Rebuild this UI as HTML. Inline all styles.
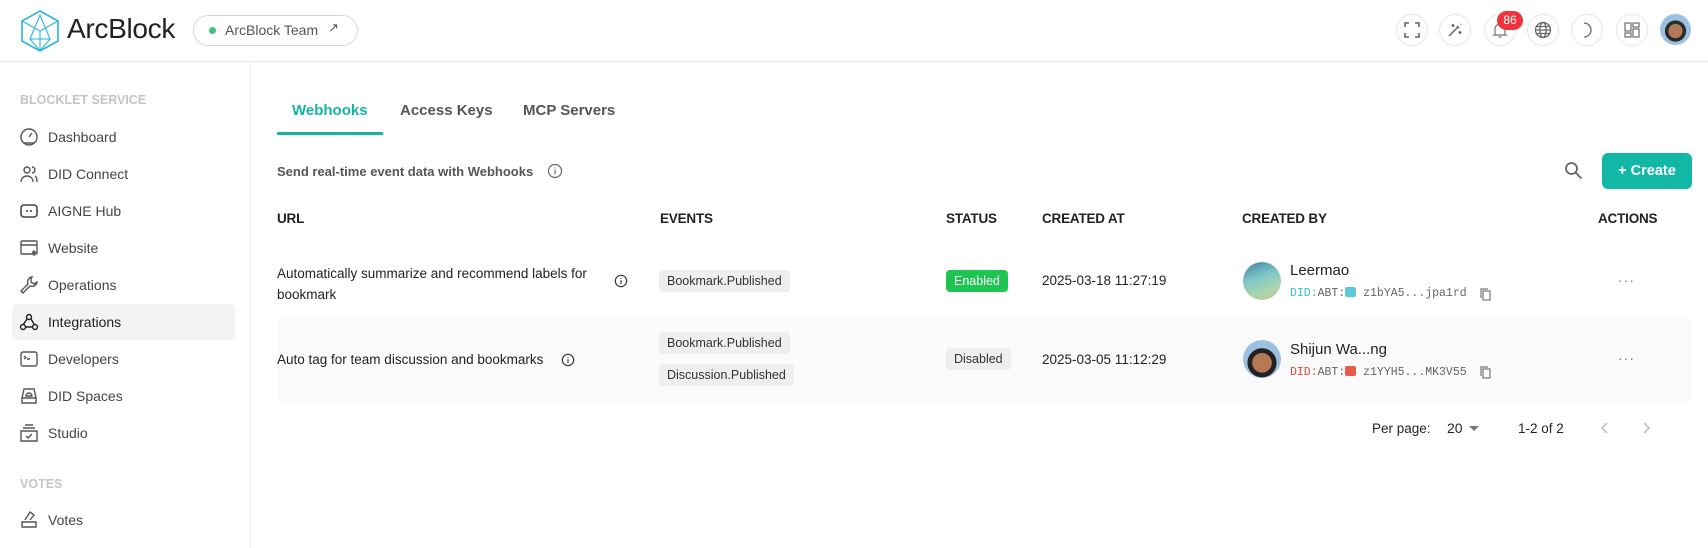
<!DOCTYPE html>
<html><head><meta charset="utf-8"><style>
*{box-sizing:border-box;margin:0;padding:0}
body{width:1708px;height:548px;overflow:hidden;background:#fff;font-family:"Liberation Sans",sans-serif;color:#222;position:relative}
.a{position:absolute;white-space:nowrap}
.hdr{position:absolute;left:0;top:0;width:1708px;height:62px;border-bottom:1px solid #e8e8e8}
.side{position:absolute;left:0;top:62px;width:251px;height:486px;border-right:1px solid #eee}
.ic{position:absolute;width:32px;height:32px;border:1px solid #e6e6e6;border-radius:50%;top:14px;display:flex;align-items:center;justify-content:center}
.nav{position:absolute;left:48px;font-size:14px;color:#444}
.ni{position:absolute;left:19px;width:20px;height:20px}
.th{position:absolute;top:211px;font-size:13.5px;color:#222;font-weight:bold;letter-spacing:-.2px}
.chip{position:absolute;height:22px;line-height:22px;padding:0 8px;background:#eee;border-radius:4px;font-size:12.5px;color:#333}
.td{position:absolute;font-size:13.5px;color:#222}
.mono{font-family:"Liberation Mono",monospace;font-size:11.5px;color:#666}
</style></head><body>
<div class="hdr"></div>
<svg class="a" style="left:19px;top:9px" width="42" height="44" viewBox="0 0 42 44" fill="none" stroke="#2bb5d8" stroke-width="1.6"><path d="M21 2 L39 12 L39 32 L21 42 L3 32 L3 12 Z"/><path d="M3 12 L21 22 L39 12 M21 22 L21 42 M21 6 L11 30 L31 30 Z M11 30 L21 42 L31 30" stroke-width="1.1"/></svg>
<div class="a" style="left:67px;top:13px;font-size:28px;color:#222;letter-spacing:-.3px">ArcBlock</div>
<div class="a" style="left:193px;top:15px;width:165px;height:31px;border:1px solid #d8d8d8;border-radius:16px"></div>
<div class="a" style="left:209px;top:27px;width:7px;height:7px;border-radius:50%;background:#3cc57a"></div>
<div class="a" style="left:225px;top:22px;font-size:14px;color:#555">ArcBlock Team</div>
<div class="a" style="left:328px;top:20px;font-size:13px;color:#555">↗</div>
<div class="ic" style="left:1396px"><svg width="16" height="16" viewBox="0 0 16 16" fill="none" stroke="#666" stroke-width="1.6"><path d="M1 5V1h4M11 1h4v4M15 11v4h-4M5 15H1v-4"/></svg></div>
<div class="ic" style="left:1439px"><svg width="16" height="16" viewBox="0 0 16 16" fill="none" stroke="#666" stroke-width="1.5"><path d="M2 14L11 5M10 4l2 2M6 2v3M4.5 3.5h3M13 9v3M11.5 10.5h3M14 2l-.5.5"/></svg></div>
<div class="ic" style="left:1484px"><svg width="16" height="18" viewBox="0 0 16 18" fill="none" stroke="#888" stroke-width="1.4"><path d="M3 13V8a5 5 0 0110 0v5l1 1H2zM6.5 16h3"/></svg></div>
<div class="a" style="left:1497px;top:11px;width:26px;height:19px;border-radius:10px;background:#f0343c;color:#fff;font-size:12px;text-align:center;line-height:19px">86</div>
<div class="ic" style="left:1527px"><svg width="18" height="18" viewBox="0 0 18 18" fill="none" stroke="#666" stroke-width="1.3"><circle cx="9" cy="9" r="7.5"/><ellipse cx="9" cy="9" rx="3.2" ry="7.5"/><path d="M1.5 9h15M2.5 5.5h13M2.5 12.5h13"/></svg></div>
<div class="ic" style="left:1571px"><svg width="14" height="16" viewBox="0 0 14 16" fill="none" stroke="#666" stroke-width="1.3"><path d="M4 1a7 7 0 010 14A7 7 0 004 1z"/></svg></div>
<div class="ic" style="left:1616px"><svg width="16" height="16" viewBox="0 0 16 16" fill="none" stroke="#777" stroke-width="1.3"><rect x="1" y="1" width="6" height="8"/><rect x="9" y="1" width="6" height="4"/><rect x="1" y="11" width="6" height="4"/><rect x="9" y="7" width="6" height="8"/></svg></div>
<div class="a" style="left:1660px;top:14px;width:31px;height:31px;border-radius:50%;background:radial-gradient(circle at 50% 55%,#b07a5a 0 30%,#2a2a2a 32% 45%,#9cc0e0 47%)"></div>
<div class="side"></div>
<div class="a" style="left:20px;top:93px;font-size:12.5px;color:#c4c4c4;font-weight:bold">BLOCKLET SERVICE</div>
<div class="a" style="left:12px;top:304px;width:223px;height:36px;background:#f3f3f3;border-radius:5px"></div>
<svg class="ni" style="top:127px" viewBox="0 0 20 20" fill="none" stroke="#555" stroke-width="1.4"><circle cx="10" cy="10" r="8"/><path d="M10 10l3-4M5 16h10"/></svg>
<div class="nav" style="top:129px">Dashboard</div>
<svg class="ni" style="top:164px" viewBox="0 0 20 20" fill="none" stroke="#555" stroke-width="1.4"><circle cx="8" cy="6" r="3"/><path d="M2 18c0-4 3-6 6-6s6 2 6 6M13 3a3 3 0 010 6M16 12c1.5 1 2 3 2 6"/></svg>
<div class="nav" style="top:166px">DID Connect</div>
<svg class="ni" style="top:201px" viewBox="0 0 20 20" fill="none" stroke="#444" stroke-width="1.6"><rect x="2" y="4" width="16" height="12" rx="3"/><path d="M8 9v2M12 9v2"/></svg>
<div class="nav" style="top:203px">AIGNE Hub</div>
<svg class="ni" style="top:238px" viewBox="0 0 20 20" fill="none" stroke="#555" stroke-width="1.4"><rect x="2" y="3" width="16" height="13" rx="1"/><path d="M2 7h16M15 18v-5M13 15l2-2 2 2"/></svg>
<div class="nav" style="top:240px">Website</div>
<svg class="ni" style="top:275px" viewBox="0 0 20 20" fill="none" stroke="#555" stroke-width="1.4"><path d="M13 2a5 5 0 00-4 7l-7 7 2 2 7-7a5 5 0 007-4l-3 2-3-2 0-3z"/></svg>
<div class="nav" style="top:277px">Operations</div>
<svg class="ni" style="top:312px" viewBox="0 0 20 20" fill="none" stroke="#222" stroke-width="1.4"><circle cx="10" cy="5" r="2.5"/><circle cx="4" cy="15" r="2.5"/><circle cx="16" cy="15" r="2.5"/><path d="M8 7l-4 6M12 7l3 5M7 15h6"/></svg>
<div class="nav" style="top:314px;color:#222">Integrations</div>
<svg class="ni" style="top:349px" viewBox="0 0 20 20" fill="none" stroke="#555" stroke-width="1.4"><rect x="2" y="3" width="16" height="14" rx="2"/><path d="M5 7l2 1.5L5 10M8 10h3"/></svg>
<div class="nav" style="top:351px">Developers</div>
<svg class="ni" style="top:386px" viewBox="0 0 20 20" fill="none" stroke="#555" stroke-width="1.4"><path d="M3 12l2-9h10l2 9v5H3zM3 12h14"/><path d="M7 10a3 3 0 016 0z"/></svg>
<div class="nav" style="top:388px">DID Spaces</div>
<svg class="ni" style="top:423px" viewBox="0 0 20 20" fill="none" stroke="#555" stroke-width="1.4"><path d="M6 2h8M4 5h12M2 8h16v10H2zM7 13l2 2 4-4"/></svg>
<div class="nav" style="top:425px">Studio</div>
<div class="a" style="left:20px;top:477px;font-size:12.5px;color:#c4c4c4;font-weight:bold">VOTES</div>
<svg class="ni" style="top:509px" viewBox="0 0 20 20" fill="none" stroke="#555" stroke-width="1.4"><path d="M3 13h14v5H3zM6 11l5-8 4 3-4 5"/></svg>
<div class="nav" style="top:512px">Votes</div>
<div class="a" style="left:292px;top:102px;font-size:15px;font-weight:bold;color:#16b59f">Webhooks</div>
<div class="a" style="left:400px;top:102px;font-size:15px;font-weight:bold;color:#555">Access Keys</div>
<div class="a" style="left:523px;top:102px;font-size:15px;font-weight:bold;color:#555">MCP Servers</div>
<div class="a" style="left:277px;top:132px;width:106px;height:3px;background:#16b59f"></div>
<div class="a" style="left:277px;top:164px;font-size:13px;font-weight:bold;color:#555">Send real-time event data with Webhooks</div>
<svg class="a" style="left:547px;top:163px" width="16" height="16" viewBox="0 0 16 16" fill="none" stroke="#666" stroke-width="1.2"><circle cx="8" cy="8" r="6.5"/><path d="M8 7v4.5M8 4.5v1"/></svg>
<svg class="a" style="left:1564px;top:161px" width="19" height="19" viewBox="0 0 19 19" fill="none" stroke="#666" stroke-width="1.8"><circle cx="7.5" cy="7.5" r="5.5"/><path d="M11.5 11.5l6 6"/></svg>
<div class="a" style="left:1602px;top:153px;width:90px;height:36px;background:#12b8a5;border-radius:6px;color:#fff;font-size:14.5px;font-weight:bold;text-align:center;line-height:36px">+ Create</div>
<div class="th" style="left:277px">URL</div>
<div class="th" style="left:660px">EVENTS</div>
<div class="th" style="left:946px">STATUS</div>
<div class="th" style="left:1042px">CREATED AT</div>
<div class="th" style="left:1242px">CREATED BY</div>
<div class="th" style="left:1598px">ACTIONS</div>
<div class="a" style="left:277px;top:318px;width:1415px;height:84px;background:#fafafa"></div>
<div class="td" style="left:277px;top:263px;line-height:21px">Automatically summarize and recommend labels for<br>bookmark</div>
<svg class="a" style="left:614px;top:274px" width="14" height="14" viewBox="0 0 16 16" fill="none" stroke="#333" stroke-width="1.3"><circle cx="8" cy="8" r="6.5"/><path d="M8 7v4.5M8 4.5v1"/></svg>
<div class="chip" style="left:659px;top:270px">Bookmark.Published</div>
<div class="chip" style="left:946px;top:270px;background:#1fc553;color:#fff">Enabled</div>
<div class="td" style="left:1042px;top:273px">2025-03-18 11:27:19</div>
<div class="a" style="left:1243px;top:262px;width:38px;height:38px;border-radius:50%;background:linear-gradient(160deg,#3f7fa0,#7fc6c8 40%,#a8d4b0 70%,#c9c09a)"></div>
<div class="a" style="left:1290px;top:262px;font-size:15px;color:#222">Leermao</div>
<div class="a mono" style="left:1290px;top:287px"><span style="color:#2fc6c0">DID:</span>ABT:<span style="display:inline-block;width:11px;height:10px;background:#5cc8d8;border-radius:2px;vertical-align:-1px"></span> z1bYA5...jpa1rd</div>
<svg class="a" style="left:1480px;top:288px" width="11" height="13" viewBox="0 0 11 13" fill="none" stroke="#777" stroke-width="1.2"><rect x="3" y="3" width="7" height="9"/><path d="M1 10V1h7"/></svg>
<div class="a" style="left:1618px;top:272px;font-size:14px;color:#777;letter-spacing:1px">···</div>
<div class="td" style="left:277px;top:352px">Auto tag for team discussion and bookmarks</div>
<svg class="a" style="left:561px;top:353px" width="14" height="14" viewBox="0 0 16 16" fill="none" stroke="#333" stroke-width="1.3"><circle cx="8" cy="8" r="6.5"/><path d="M8 7v4.5M8 4.5v1"/></svg>
<div class="chip" style="left:659px;top:332px">Bookmark.Published</div>
<div class="chip" style="left:659px;top:364px">Discussion.Published</div>
<div class="chip" style="left:946px;top:348px">Disabled</div>
<div class="td" style="left:1042px;top:352px">2025-03-05 11:12:29</div>
<div class="a" style="left:1243px;top:340px;width:38px;height:38px;border-radius:50%;background:radial-gradient(circle at 50% 60%,#b57a55 0 32%,#222 34% 48%,#9cc0e0 50%)"></div>
<div class="a" style="left:1290px;top:341px;font-size:15px;color:#222">Shijun Wa...ng</div>
<div class="a mono" style="left:1290px;top:366px"><span style="color:#e8463a">DID:</span>ABT:<span style="display:inline-block;width:11px;height:10px;background:#e8594a;border-radius:2px;vertical-align:-1px"></span> z1YYH5...MK3V55</div>
<svg class="a" style="left:1480px;top:366px" width="11" height="13" viewBox="0 0 11 13" fill="none" stroke="#777" stroke-width="1.2"><rect x="3" y="3" width="7" height="9"/><path d="M1 10V1h7"/></svg>
<div class="a" style="left:1618px;top:350px;font-size:14px;color:#777;letter-spacing:1px">···</div>
<div class="td" style="left:1372px;top:421px">Per page:</div>
<div class="td" style="left:1447px;top:420px;font-size:14px">20</div>
<div class="a" style="left:1469px;top:426px;width:0;height:0;border-left:5px solid transparent;border-right:5px solid transparent;border-top:5px solid #777"></div>
<div class="td" style="left:1518px;top:421px">1-2 of 2</div>
<svg class="a" style="left:1600px;top:420px" width="10" height="16" viewBox="0 0 10 16" fill="none" stroke="#bbb" stroke-width="1.5"><path d="M7 3L2 8l5 5"/></svg>
<svg class="a" style="left:1641px;top:420px" width="10" height="16" viewBox="0 0 10 16" fill="none" stroke="#bbb" stroke-width="1.5"><path d="M3 3l5 5-5 5"/></svg>
</body></html>
